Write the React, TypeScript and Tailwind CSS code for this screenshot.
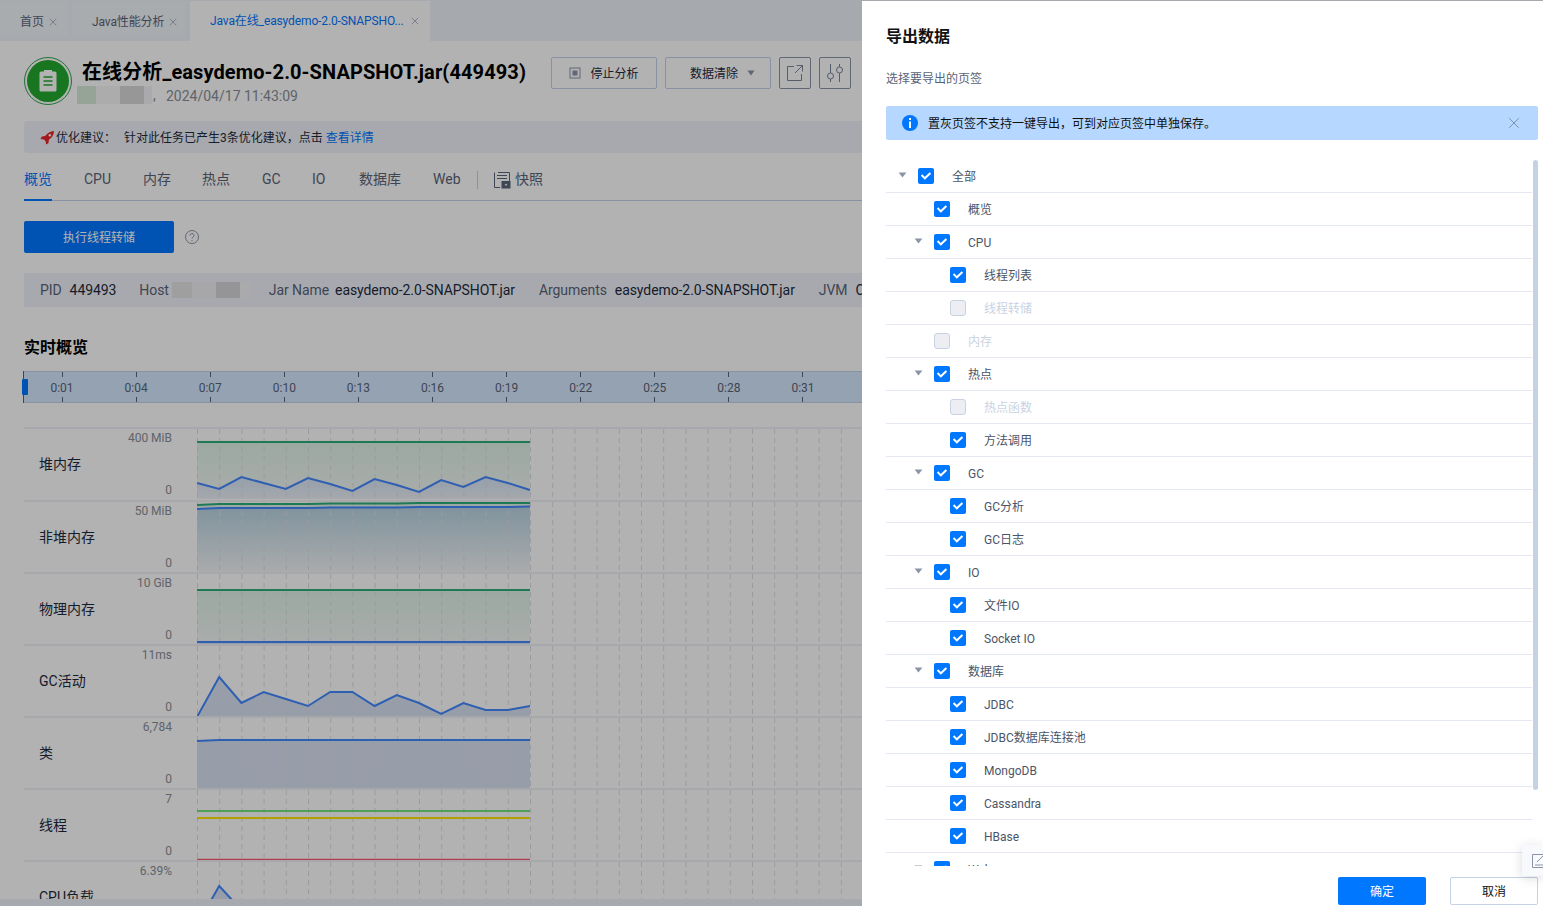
import { X } from "lucide-react";

const sans = "font-['Roboto','Noto_Sans_CJK_SC',sans-serif]";

const pageTabs = [
  { label: "首页", w: "w-[68px]", pl: "pl-[20px]" },
  { label: "Java性能分析", w: "w-[114px]", pl: "pl-[20px]" },
];
const navTabs = [
  { label: "概览", w: "w-[60px]", active: true },
  { label: "CPU", w: "w-[59px]" },
  { label: "内存", w: "w-[59px]" },
  { label: "热点", w: "w-[60px]" },
  { label: "GC", w: "w-[50px]" },
  { label: "IO", w: "w-[47px]" },
  { label: "数据库", w: "w-[74px]" },
  { label: "Web", w: "w-[44px]" },
];
const ticks = ["0:01", "0:04", "0:07", "0:10", "0:13", "0:16", "0:19", "0:22", "0:25", "0:28", "0:31"];

type Series = { ys: number[]; stroke: string; fill?: string; width?: number };
type Row = { label: string; top: number; max: string; h: string; series: Series[] };

const flat = (y: number) => Array.from({ length: 16 }, () => y);

const rows: Row[] = [
  {
    label: "堆内存",
    top: 428,
    max: "400 MiB",
    h: "h-[73px]",
    series: [
      { ys: flat(442), stroke: "#2cae7a", fill: "url(#fadeGreen)" },
      {
        ys: [483, 489, 477, 483, 489, 478, 484, 491, 479, 485, 492, 480, 487, 477, 483, 490],
        stroke: "#4388ff",
        fill: "url(#fadeBlue)",
      },
    ],
  },
  {
    label: "非堆内存",
    top: 501,
    max: "50 MiB",
    h: "h-[72px]",
    series: [
      {
        ys: [505, 504, 504, 504, 504, 504, 503.5, 503.5, 503.5, 503.5, 503, 503, 503, 503, 503, 503],
        stroke: "#2cae7a",
        fill: "url(#fadeGreen)",
      },
      {
        ys: [509, 508, 508, 508, 508, 508, 507.5, 507.5, 507.5, 507.5, 507, 507, 507, 507, 507, 506.5],
        stroke: "#4388ff",
        fill: "url(#fadeBlueDeep)",
      },
    ],
  },
  {
    label: "物理内存",
    top: 573,
    max: "10 GiB",
    h: "h-[72px]",
    series: [
      { ys: flat(590), stroke: "#2cae7a", fill: "url(#fadeGreen)" },
      { ys: flat(642), stroke: "#4388ff", fill: "#d9e3f3" },
    ],
  },
  {
    label: "GC活动",
    top: 645,
    max: "11ms",
    h: "h-[72px]",
    series: [
      {
        ys: [717, 677, 703, 692, 699, 706, 692, 692, 706, 695, 703, 714, 703, 710, 710, 706],
        stroke: "#4388ff",
        fill: "#d9e3f3",
      },
    ],
  },
  {
    label: "类",
    top: 717,
    max: "6,784",
    h: "h-[72px]",
    series: [{ ys: [741, ...flat(740).slice(1)], stroke: "#4388ff", fill: "#d9e3f3" }],
  },
  {
    label: "线程",
    top: 789,
    max: "7",
    h: "h-[72px]",
    series: [
      { ys: flat(811), stroke: "#70e47e" },
      { ys: flat(818), stroke: "#ffe400" },
      { ys: flat(859.5), stroke: "#fb5b72", width: 1.5 },
    ],
  },
  {
    label: "CPU负载",
    top: 861,
    max: "6.39%",
    h: "h-[72px]",
    series: [
      {
        ys: [925, 886, 910, 925, 925, 925, 925, 925, 925, 925, 925, 925, 925, 925, 925, 925],
        stroke: "#4388ff",
        fill: "#d9e3f3",
      },
    ],
  },
];

const treeRows = [
  { label: "全部", level: 0, caret: true, on: true },
  { label: "概览", level: 1, on: true },
  { label: "CPU", level: 1, caret: true, on: true },
  { label: "线程列表", level: 2, on: true },
  { label: "线程转储", level: 2, on: false },
  { label: "内存", level: 1, on: false },
  { label: "热点", level: 1, caret: true, on: true },
  { label: "热点函数", level: 2, on: false },
  { label: "方法调用", level: 2, on: true },
  { label: "GC", level: 1, caret: true, on: true },
  { label: "GC分析", level: 2, on: true },
  { label: "GC日志", level: 2, on: true },
  { label: "IO", level: 1, caret: true, on: true },
  { label: "文件IO", level: 2, on: true },
  { label: "Socket IO", level: 2, on: true },
  { label: "数据库", level: 1, caret: true, on: true },
  { label: "JDBC", level: 2, on: true },
  { label: "JDBC数据库连接池", level: 2, on: true },
  { label: "MongoDB", level: 2, on: true },
  { label: "Cassandra", level: 2, on: true },
  { label: "HBase", level: 2, on: true },
  { label: "Web", level: 1, caret: true, on: true },
];

function Chart({ row }: { row: Row }) {
  const step = 22.2;
  const grid = Array.from({ length: 32 }, (_, i) => i * step + 0.5);
  return (
    <svg viewBox="0 1 720 70" className="h-[70px] w-[720px] flex-none">
      {row.series.map((s, i) =>
        s.fill ? (
          <polygon
            key={i}
            fill={s.fill}
            points={
              s.ys.map((y, j) => `${j * step},${y - row.top}`).join(" ") +
              ` ${15 * step},72 0,72`
            }
          />
        ) : null,
      )}
      {grid.map((x) => (
        <line key={x} x1={x} x2={x} y1={1} y2={72} stroke="#dcdfe4" strokeDasharray="5 4" />
      ))}
      {row.series.map((s, i) => (
        <polyline
          key={i}
          fill="none"
          stroke={s.stroke}
          strokeWidth={s.width ?? 2}
          points={s.ys.map((y, j) => `${j * step},${y - row.top}`).join(" ")}
        />
      ))}
    </svg>
  );
}

function Checkbox({ on }: { on: boolean }) {
  if (!on) {
    return <span className="h-4 w-4 flex-none rounded-[3px] border border-[#c9d2e3] bg-[#eceef4]" />;
  }
  return (
    <span className="flex h-4 w-4 flex-none items-center justify-center rounded-[2px] bg-[#0077ff]">
      <svg viewBox="0 0 12 12" className="h-[14px] w-[14px]">
        <path d="M2.2 5.2 5 8l4.8-4.6" fill="none" stroke="#fff" strokeWidth="1.7" />
      </svg>
    </span>
  );
}

function Caret({ className }: { className: string }) {
  return (
    <svg viewBox="0 0 10 7" className={className}>
      <path d="M0.5 0.5h9L5 6.5z" fill="#8b94a7" />
    </svg>
  );
}

export default function App() {
  return (
    <div className={`relative flex h-[906px] w-[1543px] flex-col overflow-hidden bg-white text-[#1f2a3d] ${sans}`}>
      {/* tab strip */}
      <div className="flex h-[41px] flex-none gap-[4px] bg-[#eef3fa] pt-[1px] text-[12px] tracking-[-0.12px] text-[#5a6478]">
        {pageTabs.map((t) => (
          <div key={t.label} className={`flex h-[36px] items-center bg-[#f3f6fb] pt-[6px] ${t.w} ${t.pl}`}>
            <span>{t.label}</span>
            <X size={12} strokeWidth={1.2} className="ml-[3px] text-[#7d879b]" />
          </div>
        ))}
        <div className="flex h-[40px] w-[240px] items-center bg-white pl-[20px] text-[#0077ff]">
          <span>Java在线_easydemo-2.0-SNAPSHO...</span>
          <X size={12} strokeWidth={1.2} className="ml-[5px] text-[#7d879b]" />
        </div>
      </div>

      {/* header */}
      <div className="flex h-[80px] flex-none items-start pl-[24px] pt-[16px]">
        <svg viewBox="0 0 48 48" className="h-12 w-12 flex-none">
          <circle cx="24" cy="24" r="23.5" fill="#fff" stroke="#2ea44f" />
          <circle cx="24" cy="24" r="21" fill="#23a82f" />
          <path
            d="M17 14.5h3v-1.5h8v1.5h3a1.5 1.5 0 0 1 1.5 1.500v17a1.500 1.500 0 0 1-1.500 1.500h-14a1.500 1.500 0 0 1-1.500-1.500v-17a1.500 1.500 0 0 1 1.500-1.500z"
            fill="#fff"
          />
          <path d="M19.500 20h9M19.500 24h9M19.500 28h9" stroke="#23a82f" strokeWidth="1.500" />
        </svg>
        <div className="ml-[5px] w-[474px] flex-none">
          <h1 className="ml-[5px] whitespace-nowrap pt-[1px] text-[20px] font-bold leading-[28px] tracking-[0.1px] text-black">
            在线分析_easydemo-2.0-SNAPSHOT.jar(449493)
          </h1>
          <div className="flex h-[18px] items-center text-[14px] text-[#8a8f99]">
            <span className="h-full w-[19px] bg-[#d6ebd8]" />
            <span className="h-full w-[24px] bg-[#f6f6f8]" />
            <span className="h-full w-[24px] bg-[#d8d8d8]" />
            <span className="h-full w-[8px] bg-[#f4f4f6]" />
            <span className="ml-[1px] w-[13px]">,</span>
            <span className="pt-[2px]">2024/04/17 11:43:09</span>
          </div>
        </div>
        <div className="flex items-center gap-[8px] text-[12px] text-[#1f2a3d]">
          <button className="flex h-8 w-[106px] items-center justify-center gap-[9px] rounded-[2px] border border-[#c5d2e9]">
            <svg viewBox="0 0 12 12" className="h-3 w-3">
              <rect x="1" y="1" width="10" height="10" fill="none" stroke="#8b94a7" />
              <rect x="3.500" y="3.500" width="5" height="5" fill="#8b94a7" />
            </svg>
            <span className="pt-[1px]">停止分析</span>
          </button>
          <button className="flex h-8 w-[106px] items-center justify-center gap-[9px] rounded-[2px] border border-[#c5d2e9] pl-[9px]">
            <span className="pt-[1px]">数据清除</span>
            <Caret className="h-[6px] w-[8px]" />
          </button>
          <button className="flex h-8 w-8 items-center justify-center rounded-[2px] border border-[#8b94a7]">
            <svg viewBox="0 0 18 18" className="h-[18px] w-[18px]" fill="none" stroke="#7a8599" strokeWidth="1">
              <path d="M8 2.500H1.500v14h14V10M10.500 1.500h6v6M16.500 1.500 9 9" />
            </svg>
          </button>
          <button className="flex h-8 w-8 items-center justify-center rounded-[2px] border border-[#8b94a7]">
            <svg viewBox="0 0 18 20" className="h-5 w-[18px]" fill="none" stroke="#7a8599" strokeWidth="1">
              <path d="M4.500 1v9M4.500 16v3M13.500 1v3M13.500 10v9" />
              <circle cx="4.500" cy="13" r="3" />
              <circle cx="13.500" cy="7" r="3" />
            </svg>
          </button>
        </div>
      </div>

      {/* advice */}
      <div className="ml-[24px] flex h-[32px] flex-none items-center rounded-[3px] bg-[#f0f3f9] pl-[16px] pt-[1px] text-[12px]">
        <svg viewBox="0 0 16 16" className="h-[15px] w-[15px] flex-none">
          <path d="M15 1c-4 .3-7 2-9.500 5.500L2 7 .5 9.500 4 10l2 2 .5 3.500L9 14l.5-3.500C13 8 14.700 5 15 1z" fill="#e8262a" />
          <circle cx="10.500" cy="5.500" r="1.300" fill="#fff" />
        </svg>
        <span className="ml-[1px] w-[68px]">优化建议：</span>
        <span>针对此任务已产生3条优化建议，点击</span>
        <span className="ml-[3px] text-[#0077ff]">查看详情</span>
      </div>

      {/* nav tabs */}
      <div className="ml-[24px] flex h-[48px] flex-none items-center border-b border-[#c5d2e9] pt-[6px] text-[14px] text-[#5a6478]">
        {navTabs.map((t) => (
          <div key={t.label} className={`relative flex h-full items-center ${t.w}`}>
            <span className={t.active ? "text-[#0077ff]" : ""}>{t.label}</span>
            {t.active && <span className="absolute bottom-[-1px] left-0 h-[2px] w-[28px] bg-[#0077ff]" />}
          </div>
        ))}
        <span className="h-[18px] w-px bg-[#c5d2e9]" />
        <svg viewBox="0 0 18 18" className="ml-[15px] h-[18px] w-[18px]" fill="none" stroke="#5a6478">
          <path d="M5 1.500H16.500V10M1.500 1.500V16.500H7M4 4.500h10M4 7.500h10" />
          <rect x="9" y="10.500" width="8" height="6.500" fill="#5a6478" />
          <circle cx="13" cy="13.700" r="1.500" fill="#eef3fa" />
        </svg>
        <span className="ml-[4px]">快照</span>
      </div>

      {/* action */}
      <div className="ml-[24px] mt-[20px] flex flex-none items-center">
        <button className="h-8 w-[150px] rounded-[2px] bg-[#0077ff] pt-[1px] text-[12px] text-white">执行线程转储</button>
        <svg viewBox="0 0 14 14" className="ml-[11px] h-[14px] w-[14px]" fill="none" stroke="#8b94a7">
          <circle cx="7" cy="7" r="6.500" />
          <path d="M5 5.500a2 2 0 1 1 3 1.700c-.7.400-1 .8-1 1.500M7 10v1" />
        </svg>
      </div>

      {/* process info */}
      <div className="ml-[24px] mt-[20px] flex h-[34px] flex-none items-center whitespace-nowrap bg-[#f0f3f9] pl-[16px] text-[14px] tracking-[-0.08px] text-[#1f2a3d]">
        <span className="text-[#5a6478]">PID</span>
        <span className="ml-[8px]">449493</span>
        <span className="ml-[23px] text-[#5a6478]">Host</span>
        <span className="ml-[3px] flex h-[16px]">
          <span className="w-[20px] bg-[#e4e4e6]" />
          <span className="w-[24px] bg-[#f0f0f4]" />
          <span className="w-[24px] bg-[#d6d6da]" />
          <span className="w-[12px] bg-[#f4f4f8]" />
        </span>
        <span className="ml-[17px] text-[#5a6478]">Jar Name</span>
        <span className="ml-[6px]">easydemo-2.0-SNAPSHOT.jar</span>
        <span className="ml-[24px] text-[#5a6478]">Arguments</span>
        <span className="ml-[8px]">easydemo-2.0-SNAPSHOT.jar</span>
        <span className="ml-[24px] text-[#5a6478]">JVM</span>
        <span className="ml-[8px]">C</span>
      </div>

      <h2 className="ml-[24px] mt-[29px] flex-none text-[16px] font-bold leading-[24px] text-black">实时概览</h2>

      {/* timeline */}
      <div className="relative ml-[24px] mt-[11px] flex h-[32px] flex-none border-y border-[#c5d2e9] bg-[#d6e9ff] pl-[1px] text-[12px] text-[#5a6478]">
        {ticks.map((t) => (
          <div key={t} className="flex w-[74.1px] flex-none flex-col items-center justify-between">
            <span className="h-[5px] w-px bg-[#5a6478]" />
            <span className="pt-[1px] leading-[14px]">{t}</span>
            <span className="h-[5px] w-px bg-[#5a6478]" />
          </div>
        ))}
        <span className="absolute left-[-1px] top-[-1px] h-[32px] w-px bg-[#0077ff]" />
        <span className="absolute left-[-2px] top-[7px] h-[16px] w-[6px] rounded-[1px] bg-[#0077ff]" />
      </div>

      {/* charts */}
      <div className="ml-[24px] mt-[24px] min-h-0 flex-1 overflow-hidden">
        {rows.map((row) => (
          <div key={row.label} className={`flex flex-none border-t-2 border-[#eef1f6] ${row.h}`}>
            <div className="flex h-[70px] w-[120px] flex-none items-center pt-[1px] pl-[15px] text-[14px] text-[#1f2a3d]">
              {row.label}
            </div>
            <div className="flex h-[71px] w-[28px] flex-none flex-col items-end justify-between pb-[1px] text-[12px] text-[#8a8f99]">
              <span className="whitespace-nowrap">{row.max}</span>
              <span>0</span>
            </div>
            <div className="w-[25px] flex-none" />
            <Chart row={row} />
          </div>
        ))}
      </div>
      <div className="h-[7px] flex-none bg-[#eef3fa]" />

      {/* gradients for the chart fills */}
      <svg className="absolute h-0 w-0">
        <defs>
          <linearGradient id="fadeGreen" x1="0" y1="0" x2="0" y2="1">
            <stop offset="0" stopColor="#dff3e8" />
            <stop offset="1" stopColor="#f4f7f6" />
          </linearGradient>
          <linearGradient id="fadeBlue" x1="0" y1="0" x2="0" y2="1">
            <stop offset="0" stopColor="#d6e4f5" />
            <stop offset="1" stopColor="#eef2f8" />
          </linearGradient>
          <linearGradient id="fadeBlueDeep" x1="0" y1="0" x2="0" y2="1">
            <stop offset="0" stopColor="#b8d3e2" />
            <stop offset="1" stopColor="#f4f6f8" />
          </linearGradient>
        </defs>
      </svg>

      {/* modal mask */}
      <div className="absolute inset-0 bg-black/30" />

      {/* export drawer */}
      <div className="absolute bottom-0 right-0 top-[1px] flex w-[681px] flex-col bg-white pl-[24px] pt-[25px]">
        <h3 className="text-[16px] font-bold leading-[22px] text-[#111]">导出数据</h3>
        <p className="mt-[23px] pt-[1px] text-[12px] leading-[15px] text-[#5a6478]">选择要导出的页签</p>
        <div className="mr-[5px] mt-[19px] flex h-[34px] flex-none items-center rounded-[2px] bg-[#b6d7ff] pl-[16px] pr-[15px] text-[12px] text-[#111]">
          <svg viewBox="0 0 16 16" className="h-4 w-4 flex-none">
            <circle cx="8" cy="8" r="8" fill="#0077ff" />
            <rect x="7" y="3" width="2" height="2" fill="#fff" />
            <rect x="7" y="6.500" width="2" height="6.500" fill="#fff" />
          </svg>
          <span className="ml-[10px] pt-[1px]">置灰页签不支持一键导出，可到对应页签中单独保存。</span>
          <X size={18} strokeWidth={1} className="ml-auto text-[#6f7b92]" />
        </div>
        <div className="mt-[20px] flex h-[706px] flex-none gap-px overflow-hidden">
          <div className="w-[646px] flex-none">
            {treeRows.map((r) => (
              <div
                key={r.label}
                className={`flex h-[33px] items-center border-b border-[#e3e8f2] text-[12px] ${r.on ? "text-[#4b5568]" : "text-[#c9d2e3]"} ${
                  r.level === 0 ? "pl-[32px]" : r.level === 1 ? "pl-[48px]" : "pl-[64px]"
                }`}
              >
                <span className="relative flex">
                  {r.caret && <Caret className="absolute left-[-20px] top-[4px] h-[6px] w-[9px]" />}
                  <Checkbox on={r.on} />
                </span>
                <span className="ml-[18px] pt-[1px]">{r.label}</span>
              </div>
            ))}
          </div>
          <div className="h-[630px] w-[5px] flex-none rounded-[3px] bg-[#c5d2e4]" />
        </div>
        <div className="mr-[5px] mt-[11px] flex justify-end gap-[24px] text-[12px]">
          <button className="h-[28px] w-[88px] rounded-[2px] bg-[#0077ff] pt-[1px] text-white">确定</button>
          <button className="h-[28px] w-[88px] rounded-[2px] border border-[#c5d2e4] pt-[1px] text-[#111]">取消</button>
        </div>
      </div>

      {/* floating feedback tab */}
      <div className="absolute right-0 top-[845px] flex h-[31px] w-[21px] items-center rounded-l-[3px] bg-[#f8f9fc] pl-[10px] shadow-[0_2px_12px_rgba(0,0,0,0.15)]">
        <svg viewBox="0 0 14 14" className="h-[14px] w-[14px] flex-none" fill="none" stroke="#8b94a7">
          <path d="M12 .5H.5v13h13V4M11 2 5 8M3 11h8" />
        </svg>
      </div>
    </div>
  );
}
